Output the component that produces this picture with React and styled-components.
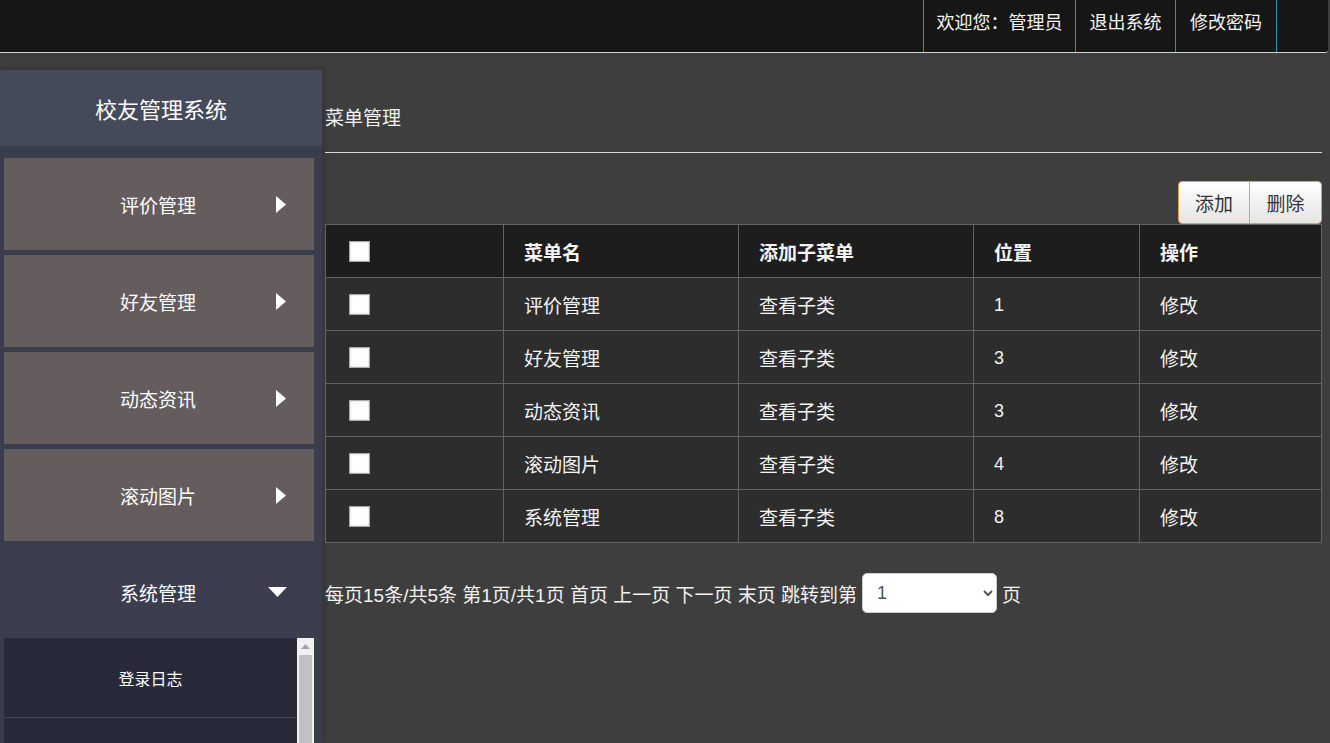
import React from "react";
import styled, { createGlobalStyle } from "styled-components";

const GlobalStyle = createGlobalStyle`
  html, body {
    margin: 0;
    padding: 0;
    height: 100%;
    overflow: hidden;
    background: #3e3e3e;
    font-family: "Liberation Sans", "Noto Sans CJK SC", sans-serif;
  }
  * { box-sizing: border-box; }
`;

const Page = styled.div`
  height: 100vh;
  display: flex;
  flex-direction: column;
  overflow: hidden;
`;

// top bar with user links on the right
const Header = styled.div`
  height: 53px;
  flex-shrink: 0;
  width: 1328px;
  background: #161616;
  border-bottom: 1px solid #d0d0d0;
  border-bottom-right-radius: 3px;
  display: flex;
  justify-content: flex-end;
  padding-right: 51px;
`;

const NavItem = styled.div`
  height: 100%;
  width: ${({ $w }) => $w}px;
  padding-top: 9px;
  text-align: center;
  line-height: 24px;
  font-size: 18px;
  color: #f4f4f4;
  border-left: 1px solid #3a8db3;
  font-family: "Noto Sans CJK SC", sans-serif;
  white-space: nowrap;
  &:last-child {
    border-right: 1px solid #3a8db3;
  }
`;

const Body = styled.div`
  flex: 1;
  min-height: 0;
  display: flex;
  gap: 3px;
  padding-top: 17px;
`;

const Sidebar = styled.div`
  width: 322px;
  flex-shrink: 0;
  display: flex;
  flex-direction: column;
  background: #3a3d4b;
  box-shadow: 0 0 8px rgba(0, 0, 0, 0.25);
  min-height: 0;
`;

const Brand = styled.div`
  height: 76px;
  flex-shrink: 0;
  background: #454a5b;
  color: #fff;
  font-size: 22px;
  display: flex;
  align-items: center;
  justify-content: center;
  font-family: "Noto Sans CJK SC", sans-serif;
`;

const MenuList = styled.div`
  padding: 12px 8px 0 4px;
  display: flex;
  flex-direction: column;
  gap: 5px;
  flex: 1;
  min-height: 0;
`;

const MenuItem = styled.div`
  height: 92px;
  flex-shrink: 0;
  background: ${({ $open }) => ($open ? "#3c3e4f" : "#655c5e")};
  display: grid;
  grid-template-columns: 1fr auto 1fr;
  align-items: center;
  color: #fff;
  font-size: 19px;
  font-family: "Noto Sans CJK SC", sans-serif;
  cursor: pointer;
`;

const MenuLabel = styled.span`
  grid-column: 2;
  margin-right: 2px;
`;

const Arrow = styled.span`
  grid-column: 3;
  justify-self: end;
  padding-right: ${({ $open }) => ($open ? "27px" : "28px")};
  display: flex;
  align-items: center;
`;

const OpenGroup = styled.div`
  display: flex;
  flex-direction: column;
  flex: 1;
  min-height: 0;
`;

const SubPanel = styled.div`
  flex: 1;
  min-height: 0;
  display: flex;
  background: #282a3a;
`;

const SubList = styled.div`
  flex: 1;
  overflow: hidden;
`;

const ScrollBar = styled.div`
  width: 17px;
  flex-shrink: 0;
  background: #f1f1f1;
  display: flex;
  flex-direction: column;
`;

const ScrollButton = styled.div`
  height: 17px;
  display: flex;
  align-items: center;
  justify-content: center;
`;

const ScrollThumb = styled.div`
  flex: 1;
  margin: 0 2px;
  background: #c1c1c1;
`;

const SubItem = styled.div`
  height: 80px;
  border-bottom: 1px solid #44475a;
  display: flex;
  align-items: center;
  justify-content: center;
  color: #fff;
  font-size: 16px;
  font-family: "Noto Sans CJK SC", sans-serif;
`;

const Main = styled.div`
  width: 997px;
  flex-shrink: 0;
  display: flex;
  flex-direction: column;
`;

const PageTitle = styled.div`
  padding: 35px 0 23px;
  line-height: 24px;
  font-size: 19px;
  color: #f2f2f2;
  border-bottom: 1px solid #d8d8d8;
  font-family: "Noto Sans CJK SC", sans-serif;
`;

const Toolbar = styled.div`
  display: flex;
  justify-content: flex-end;
  margin-top: 28px;
`;

const ButtonGroup = styled.div`
  display: flex;
  border: 1px solid #dca352;
  border-radius: 4px;
  overflow: hidden;
`;

const ToolButton = styled.button`
  height: 41px;
  width: ${({ $w }) => $w}px;
  border: none;
  background: linear-gradient(to bottom, #ffffff, #e4e4e4);
  color: #333;
  font-size: 19px;
  font-family: "Noto Sans CJK SC", sans-serif;
  padding: 0;
  cursor: pointer;
  & + & {
    border-left: 1px solid #dca352;
  }
`;

const Table = styled.table`
  width: 100%;
  border-collapse: collapse;
  font-size: 19px;
  color: #f4f4f4;
  font-family: "Noto Sans CJK SC", sans-serif;
`;

const Th = styled.th`
  height: 53px;
  width: ${({ $w }) => $w}px;
  background: #1d1d1d;
  border: 1px solid #626262;
  text-align: left;
  padding: 0 0 0 20px;
  font-weight: 700;
`;

const Td = styled.td`
  height: 53px;
  background: #2d2d2d;
  border: 1px solid #626262;
  padding: ${({ $num }) => ($num ? "3px 0 0 20px" : "0 0 0 20px")};
  font-size: ${({ $num }) => ($num ? "18px" : "19px")};
  font-family: ${({ $num }) =>
    $num ? '"Liberation Sans", sans-serif' : '"Noto Sans CJK SC", sans-serif'};
`;

const CheckCell = styled.div`
  display: flex;
  align-items: center;
  padding-left: 3px;
`;

const Check = styled.input.attrs({ type: "checkbox" })`
  appearance: none;
  margin: 0;
  width: 21px;
  height: 21px;
  background: #fff;
  border: 1px solid #a9a9a9;
  box-shadow: inset 0 0 2px rgba(0, 0, 0, 0.25);
`;

const Pager = styled.div`
  margin-top: 30px;
  display: flex;
  align-items: center;
  gap: 5px;
  font-size: 19px;
  color: #f2f2f2;
  font-family: "Liberation Sans", "Noto Sans CJK SC", sans-serif;
`;

const PageSelect = styled.select`
  width: 135px;
  height: 40px;
  border-radius: 5px;
  border: 1px solid #ccc;
  background: #fff;
  color: #555;
  font-size: 18px;
  padding: 0 10px;
  font-family: "Liberation Sans", sans-serif;
`;

const RightArrow = () => (
  <svg width="10" height="17" viewBox="0 0 10 17">
    <polygon points="0,0 10,8.5 0,17" fill="#fff" />
  </svg>
);

const DownArrow = () => (
  <svg width="19" height="10" viewBox="0 0 19 10">
    <polygon points="0,0 19,0 9.5,10" fill="#fff" />
  </svg>
);

const UpSmall = () => (
  <svg width="9" height="5" viewBox="0 0 9 5">
    <polygon points="0,5 4.5,0 9,5" fill="#a3a3a3" />
  </svg>
);

const menus = ["评价管理", "好友管理", "动态资讯", "滚动图片"];
const subMenus = ["登录日志"];

const rows = [
  { name: "评价管理", pos: 1 },
  { name: "好友管理", pos: 3 },
  { name: "动态资讯", pos: 3 },
  { name: "滚动图片", pos: 4 },
  { name: "系统管理", pos: 8 },
];

export default function App() {
  return (
    <Page>
      <GlobalStyle />
      <Header>
        <NavItem $w={152}>欢迎您：管理员</NavItem>
        <NavItem $w={100}>退出系统</NavItem>
        <NavItem $w={102}>修改密码</NavItem>
      </Header>
      <Body>
        <Sidebar>
          <Brand>校友管理系统</Brand>
          <MenuList>
            {menus.map((m) => (
              <MenuItem key={m}>
                <MenuLabel>{m}</MenuLabel>
                <Arrow>
                  <RightArrow />
                </Arrow>
              </MenuItem>
            ))}
            <OpenGroup>
              <MenuItem $open>
                <MenuLabel>系统管理</MenuLabel>
                <Arrow $open>
                  <DownArrow />
                </Arrow>
              </MenuItem>
              <SubPanel>
                <SubList>
                  {subMenus.map((s) => (
                    <SubItem key={s}>{s}</SubItem>
                  ))}
                </SubList>
                <ScrollBar>
                  <ScrollButton>
                    <UpSmall />
                  </ScrollButton>
                  <ScrollThumb />
                </ScrollBar>
              </SubPanel>
            </OpenGroup>
          </MenuList>
        </Sidebar>
        <Main>
          <PageTitle>菜单管理</PageTitle>
          <Toolbar>
            <ButtonGroup>
              <ToolButton $w={70}>添加</ToolButton>
              <ToolButton $w={72}>删除</ToolButton>
            </ButtonGroup>
          </Toolbar>
          <Table>
            <thead>
              <tr>
                <Th $w={178}>
                  <CheckCell>
                    <Check />
                  </CheckCell>
                </Th>
                <Th $w={235}>菜单名</Th>
                <Th $w={235}>添加子菜单</Th>
                <Th $w={166}>位置</Th>
                <Th>操作</Th>
              </tr>
            </thead>
            <tbody>
              {rows.map((r) => (
                <tr key={r.name}>
                  <Td>
                    <CheckCell>
                      <Check />
                    </CheckCell>
                  </Td>
                  <Td>{r.name}</Td>
                  <Td>查看子类</Td>
                  <Td $num>{r.pos}</Td>
                  <Td>修改</Td>
                </tr>
              ))}
            </tbody>
          </Table>
          <Pager>
            <span>每页15条/共5条 第1页/共1页 首页 上一页 下一页 末页 跳转到第</span>
            <PageSelect defaultValue="1">
              <option value="1">1</option>
            </PageSelect>
            <span>页</span>
          </Pager>
        </Main>
      </Body>
    </Page>
  );
}
